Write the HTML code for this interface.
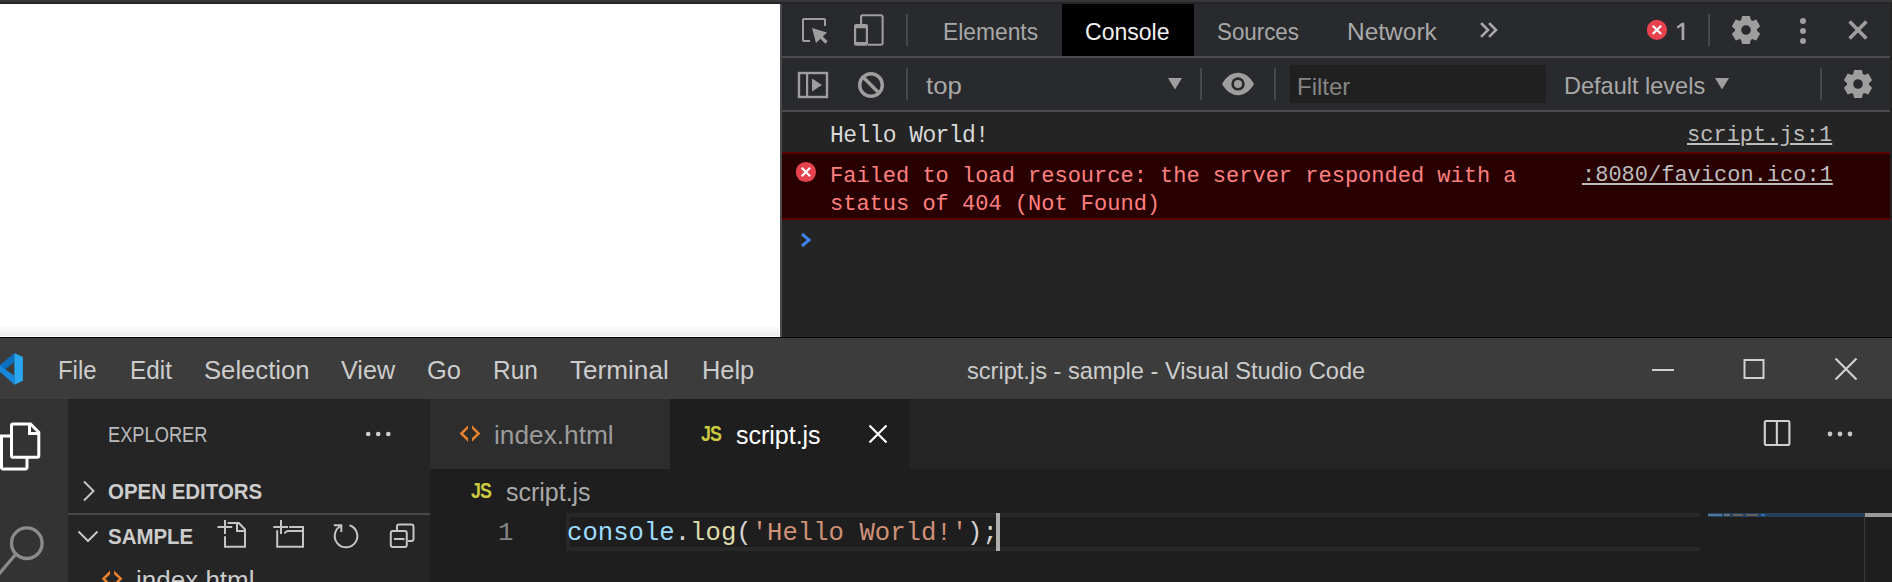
<!DOCTYPE html>
<html><head><meta charset="utf-8">
<style>
html,body{margin:0;padding:0;width:1892px;height:582px;overflow:hidden;background:#242424;}
*{box-sizing:border-box;}
.a{position:absolute;}
.s{font-family:"Liberation Sans",sans-serif;white-space:pre;line-height:1;}
.m{font-family:"Liberation Mono",monospace;white-space:pre;line-height:1;}
svg{position:absolute;overflow:visible;}
</style></head><body>
<!-- top strip -->
<div class="a" style="left:0;top:0;width:1892px;height:2px;background:#36373b"></div>
<div class="a" style="left:0;top:2px;width:1892px;height:2px;background:#252525"></div>
<!-- white page -->
<div class="a" style="left:0;top:4px;width:780px;height:333px;background:#ffffff"></div>
<div class="a" style="left:0;top:325px;width:779px;height:11px;background:linear-gradient(#ffffff,#ededed)"></div>
<!-- devtools -->
<div class="a" style="left:780px;top:4px;width:2px;height:333px;background:#4a4b4e"></div>
<div class="a" style="left:782px;top:4px;width:1110px;height:52px;background:#292a2d"></div>
<div class="a" style="left:782px;top:56px;width:1110px;height:2px;background:#4b4b4b"></div>
<div class="a" style="left:782px;top:58px;width:1110px;height:52px;background:#292a2d"></div>
<div class="a" style="left:782px;top:110px;width:1110px;height:2px;background:#4b4b4b"></div>
<div class="a" style="left:782px;top:112px;width:1110px;height:225px;background:#242424"></div>


<!-- toolbar1 icons -->
<svg style="left:0;top:0" width="1892" height="120" viewBox="0 0 1892 120">
 <g fill="none" stroke="#9e9e9e" stroke-width="2">
  <path d="M810 41H804a1 1 0 0 1-1-1V20a1 1 0 0 1 1-1H824a1 1 0 0 1 1 1V26"/>
 </g>
 <path d="M812 28L827 32.5L816 43Z" fill="#9e9e9e"/>
 <path d="M819 35L826.5 42.5" stroke="#9e9e9e" stroke-width="3.2"/>
 <path d="M861.1 24.2V16.7a1.5 1.5 0 0 1 1.5-1.5H881.1a1.5 1.5 0 0 1 1.5 1.5V43.2a1.5 1.5 0 0 1-1.5 1.5H868" fill="none" stroke="#9e9e9e" stroke-width="2.1"/>
 <path d="M856 24.1H866a2 2 0 0 1 2 2V43.8a2 2 0 0 1-2 2H856a2 2 0 0 1-2-2V26.1a2 2 0 0 1 2-2ZM856.2 28.2V42H865.8V28.2Z" fill="#9e9e9e" fill-rule="evenodd"/>
 <rect x="906" y="14" width="2" height="32" fill="#47484b"/>
 <!-- console tab bg drawn separately -->
</svg>
<div class="a" style="left:1062px;top:4px;width:132px;height:52px;background:#000"></div>
<div class="a s" style="left:943px;top:20px;font-size:24px;color:#a8a8a8;transform:scaleX(0.95);transform-origin:0 0">Elements</div>
<div class="a s" style="left:1085px;top:20px;font-size:24px;color:#f2f2f2;transform:scaleX(0.96);transform-origin:0 0">Console</div>
<div class="a s" style="left:1217px;top:20px;font-size:24px;color:#a8a8a8;transform:scaleX(0.93);transform-origin:0 0">Sources</div>
<div class="a s" style="left:1347px;top:20px;font-size:24px;color:#a8a8a8;transform:scaleX(1.02);transform-origin:0 0">Network</div>
<svg style="left:0;top:0" width="1892" height="120" viewBox="0 0 1892 120">
 <g fill="none" stroke="#a8a8a8" stroke-width="2.6" stroke-linecap="square">
  <path d="M1482 24L1488 30L1482 36"/>
  <path d="M1490 24L1496 30L1490 36"/>
 </g>
 <circle cx="1656.9" cy="29.9" r="10.1" fill="#e6434e"/>
 <path d="M1652.7 25.7L1661.1 34.1M1661.1 25.7L1652.7 34.1" stroke="#fff" stroke-width="2.1"/>
 <path d="M1684.3 22.7V40H1681.6V25.9L1677.6 28.8L1676.9 26.4L1681.9 22.7Z" fill="#a8a8a8"/>
 <rect x="1708" y="14" width="2" height="32" fill="#47484b"/>
 <!-- gear -->
 <g transform="translate(1746 30)" fill="#9e9e9e">
  <path d="M4.80 9.90L3.90 14.10L-3.90 14.10L-4.80 9.90A11.0 11.0 0 0 1 -6.17 9.11L-10.26 10.43L-14.16 3.67L-10.97 0.79A11.0 11.0 0 0 1 -10.97 -0.79L-14.16 -3.67L-10.26 -10.43L-6.17 -9.11A11.0 11.0 0 0 1 -4.80 -9.90L-3.90 -14.10L3.90 -14.10L4.80 -9.90A11.0 11.0 0 0 1 6.17 -9.11L10.26 -10.43L14.16 -3.67L10.97 -0.79A11.0 11.0 0 0 1 10.97 0.79L14.16 3.67L10.26 10.43L6.17 9.11A11.0 11.0 0 0 1 4.80 9.90ZM0 -4.8A4.8 4.8 0 1 0 0 4.8A4.8 4.8 0 1 0 0 -4.8Z" fill-rule="evenodd"/>
 </g>
 <circle cx="1803" cy="21" r="3" fill="#9e9e9e"/>
 <circle cx="1803" cy="31" r="3" fill="#9e9e9e"/>
 <circle cx="1803" cy="41" r="3" fill="#9e9e9e"/>
 <path d="M1849.6 21.6L1866.4 38.4M1866.4 21.6L1849.6 38.4" stroke="#9e9e9e" stroke-width="3.6"/>
</svg>


<!-- toolbar2 -->
<svg style="left:0;top:0" width="1892" height="120" viewBox="0 0 1892 120">
 <rect x="799" y="73" width="28" height="24" fill="none" stroke="#9e9e9e" stroke-width="2.4"/>
 <rect x="806" y="73" width="2.2" height="24" fill="#9e9e9e"/>
 <path d="M812 78.5L822 85L812 91.5Z" fill="#9e9e9e"/>
 <circle cx="871" cy="85" r="11.3" fill="none" stroke="#9e9e9e" stroke-width="3.4"/>
 <path d="M863 77L879 93" stroke="#9e9e9e" stroke-width="3.4"/>
 <rect x="906" y="68" width="2" height="32" fill="#47484b"/>
 <path d="M1168 78L1182 78L1175 89.5Z" fill="#9e9e9e"/>
 <rect x="1200" y="68" width="2" height="32" fill="#47484b"/>
 <path d="M1222 84C1226 76.7 1232 72.8 1238 72.8C1244 72.8 1250 76.7 1254 84C1250 91.3 1244 95.2 1238 95.2C1232 95.2 1226 91.3 1222 84Z" fill="#9e9e9e"/>
 <circle cx="1238" cy="83.9" r="6.7" fill="#292a2d"/>
 <circle cx="1238" cy="83.9" r="4.0" fill="#9e9e9e"/>
 <rect x="1274" y="68" width="2" height="32" fill="#47484b"/>
 <rect x="1290" y="65" width="256" height="38" fill="#202020"/>
 <path d="M1715 78L1729 78L1722 89.5Z" fill="#9e9e9e"/>
 <rect x="1820" y="68" width="2" height="32" fill="#47484b"/>
 <path transform="translate(1858 84)" fill="#9e9e9e" fill-rule="evenodd" d="M4.80 9.90L3.90 14.10L-3.90 14.10L-4.80 9.90A11.0 11.0 0 0 1 -6.17 9.11L-10.26 10.43L-14.16 3.67L-10.97 0.79A11.0 11.0 0 0 1 -10.97 -0.79L-14.16 -3.67L-10.26 -10.43L-6.17 -9.11A11.0 11.0 0 0 1 -4.80 -9.90L-3.90 -14.10L3.90 -14.10L4.80 -9.90A11.0 11.0 0 0 1 6.17 -9.11L10.26 -10.43L14.16 -3.67L10.97 -0.79A11.0 11.0 0 0 1 10.97 0.79L14.16 3.67L10.26 10.43L6.17 9.11A11.0 11.0 0 0 1 4.80 9.90ZM0 -4.8A4.8 4.8 0 1 0 0 4.8A4.8 4.8 0 1 0 0 -4.8Z"/>
</svg>
<div class="a s" style="left:926px;top:74px;font-size:24px;color:#a8a8a8;transform:scaleX(1.07);transform-origin:0 0">top</div>
<div class="a s" style="left:1297px;top:75px;font-size:24px;color:#858585">Filter</div>
<div class="a s" style="left:1564px;top:74px;font-size:24px;color:#a8a8a8;transform:scaleX(0.98);transform-origin:0 0">Default levels</div>

<!-- console -->
<div class="a m" style="left:830px;top:125px;font-size:23px;letter-spacing:-0.6px;color:#d9d9d9">Hello World!</div>
<div class="a m" style="left:1687px;top:125px;font-size:22px;color:#bdbdbd;text-decoration:underline">script.js:1</div>
<div class="a" style="left:782px;top:152px;width:1110px;height:68px;background:#5c0000"></div>
<div class="a" style="left:782px;top:154px;width:1110px;height:64px;background:#290000"></div>
<svg style="left:0;top:0" width="1892" height="260" viewBox="0 0 1892 260">
 <circle cx="805.9" cy="172" r="10.1" fill="#e6434e"/>
 <path d="M801.7 167.8L810.1 176.2M810.1 167.8L801.7 176.2" stroke="#fff" stroke-width="2.1"/>
 <path d="M802 234L809 240L802 246" fill="none" stroke="#3f82ef" stroke-width="3"/>
</svg>
<div class="a m" style="left:830px;top:163px;font-size:22px;color:#ff8080;line-height:27.5px">Failed to load resource: the server responded with a
status of 404 (Not Found)</div>
<div class="a m" style="left:1582px;top:165px;font-size:22px;color:#bdbdbd;text-decoration:underline">:8080/favicon.ico:1</div>

<div class="a" style="left:1890px;top:4px;width:2px;height:333px;background:#242424"></div>
<!-- bottom black line -->
<div class="a" style="left:0;top:337px;width:1892px;height:1px;background:#000000"></div>
<!-- VS Code -->
<div class="a" style="left:0;top:338px;width:1892px;height:61px;background:#3c3c3c"></div>
<div class="a" style="left:0;top:399px;width:68px;height:183px;background:#333333"></div>
<div class="a" style="left:68px;top:399px;width:362px;height:183px;background:#252526"></div>
<div class="a" style="left:430px;top:399px;width:1462px;height:70px;background:#252526"></div>
<div class="a" style="left:430px;top:399px;width:240px;height:70px;background:#2d2d2d"></div>
<div class="a" style="left:670px;top:399px;width:240px;height:70px;background:#1e1e1e"></div>
<div class="a" style="left:430px;top:469px;width:1462px;height:113px;background:#1e1e1e"></div>


<!-- VS title bar -->
<svg style="left:0;top:0" width="1892" height="582" viewBox="0 0 1892 582">
 <path d="M14.4 353.1V362.1L0 373.5V365Z" fill="#0b6fbd"/>
 <path d="M0 365.7L14.4 375.8V384.8L0 371.8Z" fill="#1689dc"/>
 <path d="M14.4 353.1L22.9 357V380.8L14.4 384.8Z" fill="#29a8f1"/>
 <path d="M1652 370H1674" stroke="#d0d0d0" stroke-width="2"/>
 <rect x="1744.5" y="360" width="19" height="18" fill="none" stroke="#d0d0d0" stroke-width="2"/>
 <path d="M1835.5 358.5L1856.5 379.5M1856.5 358.5L1835.5 379.5" stroke="#d0d0d0" stroke-width="2.2"/>
</svg>
<div class="a s" style="left:58px;top:357px;font-size:26px;color:#cccccc;transform:scaleX(0.92);transform-origin:0 0">File</div>
<div class="a s" style="left:130px;top:357px;font-size:26px;color:#cccccc;transform:scaleX(0.935);transform-origin:0 0">Edit</div>
<div class="a s" style="left:204px;top:357px;font-size:26px;color:#cccccc;transform:scaleX(0.987);transform-origin:0 0">Selection</div>
<div class="a s" style="left:341px;top:357px;font-size:26px;color:#cccccc;transform:scaleX(0.968);transform-origin:0 0">View</div>
<div class="a s" style="left:427px;top:357px;font-size:26px;color:#cccccc;transform:scaleX(0.98);transform-origin:0 0">Go</div>
<div class="a s" style="left:493px;top:357px;font-size:26px;color:#cccccc;transform:scaleX(0.94);transform-origin:0 0">Run</div>
<div class="a s" style="left:570px;top:357px;font-size:26px;color:#cccccc;transform:scaleX(1.005);transform-origin:0 0">Terminal</div>
<div class="a s" style="left:702px;top:357px;font-size:26px;color:#cccccc;transform:scaleX(0.977);transform-origin:0 0">Help</div>
<div class="a s" style="left:967px;top:359px;font-size:24px;color:#cccccc;transform:scaleX(0.983);transform-origin:0 0">script.js - sample - Visual Studio Code</div>

<!-- activity bar icons -->
<svg style="left:0;top:0" width="1892" height="582" viewBox="0 0 1892 582">
 <g fill="none" stroke="#ffffff" stroke-width="3">
  <path d="M11.5 436H1.5V467.5a1.5 1.5 0 0 0 1.5 1.5H25.5a1.5 1.5 0 0 0 1.5-1.5V457.5"/>
  <path d="M13 424H30.5L38.8 432.3V455.7a1.5 1.5 0 0 1-1.5 1.5H13a1.5 1.5 0 0 1-1.5-1.5V425.5a1.5 1.5 0 0 1 1.5-1.5Z"/>
  <path d="M29.5 424V433.5H38.8"/>
 </g>
 <g fill="none" stroke="#8b8b8b" stroke-width="3.3">
  <circle cx="26.8" cy="543.2" r="15.3"/>
  <path d="M16 554L-2 575"/>
 </g>
</svg>

<!-- sidebar -->
<div class="a s" style="left:108px;top:424px;font-size:22px;color:#bbbbbb;transform:scaleX(0.83);transform-origin:0 0">EXPLORER</div>
<svg style="left:0;top:0" width="1892" height="582" viewBox="0 0 1892 582">
 <circle cx="368.2" cy="434" r="2.3" fill="#d0d0d0"/>
 <circle cx="378.2" cy="434" r="2.3" fill="#d0d0d0"/>
 <circle cx="388.3" cy="434" r="2.3" fill="#d0d0d0"/>
 <path d="M84 481.5L93.5 491L84 500.5" fill="none" stroke="#c5c5c5" stroke-width="2"/>
 <rect x="68" y="513" width="362" height="2" fill="#474747"/>
 <path d="M78.5 531.5L88 541L97.5 531.5" fill="none" stroke="#c5c5c5" stroke-width="2"/>
 <g fill="none" stroke="#c5c5c5" stroke-width="2">
  <path d="M225 520V534M217.5 527H232.2"/>
  <path d="M227.6 523H238.8L245 529.5V546.8H225V536.3"/>
  <path d="M237 523V531H245"/>
  <path d="M281 520V534M273.3 527H288"/>
  <path d="M277.2 530.2V546.8H303V527H289.2"/>
  <path d="M284.3 533.2L287.4 530.9H302.5"/>
  <path d="M333.8 525.3H341.3V532"/>
  <path d="M341.4 525.7A11.3 11.3 0 1 0 349.5 525.25"/>
  <rect x="390.8" y="531" width="16" height="16" rx="2"/>
  <path d="M397 530V526.5a2 2 0 0 1 2-2H411.5a2 2 0 0 1 2 2V539a2 2 0 0 1-2 2H408"/>
  <path d="M394 539H404.5"/>
 </g>
 <path transform="translate(-357.9 145.4)" d="M468 425.2L459.6 433.4L468 441.7V438.1L463.2 433.4L468 428.8ZM472 425.2L480.4 433.4L472 441.7V438.1L476.8 433.4L472 428.8Z" fill="#e8822e"/>
</svg>
<div class="a s" style="left:108px;top:481px;font-size:22px;font-weight:bold;color:#cccccc;transform:scaleX(0.93);transform-origin:0 0">OPEN EDITORS</div>
<div class="a s" style="left:108px;top:526px;font-size:22px;font-weight:bold;color:#cccccc;transform:scaleX(0.93);transform-origin:0 0">SAMPLE</div>
<div class="a s" style="left:136px;top:567px;font-size:26px;color:#cccccc;transform:scaleX(1.0);transform-origin:0 0">index.html</div>

<!-- tabs -->
<svg style="left:0;top:0" width="1892" height="582" viewBox="0 0 1892 582">
 <path d="M468 425.2L459.6 433.4L468 441.7V438.1L463.2 433.4L468 428.8ZM472 425.2L480.4 433.4L472 441.7V438.1L476.8 433.4L472 428.8Z" fill="#e8822e"/>
 <path d="M869.5 425.5L886.5 442.5M886.5 425.5L869.5 442.5" stroke="#ffffff" stroke-width="2.2"/>
 <rect x="1764.8" y="421" width="24.6" height="24" rx="1.3" fill="none" stroke="#d0d0d0" stroke-width="2.1"/>
 <rect x="1775.8" y="421" width="2.1" height="24" fill="#d0d0d0"/>
 <circle cx="1830" cy="434" r="2.4" fill="#c5c5c5"/>
 <circle cx="1840" cy="434" r="2.4" fill="#c5c5c5"/>
 <circle cx="1850" cy="434" r="2.4" fill="#c5c5c5"/>
</svg>
<div class="a s" style="left:701px;top:424px;font-size:21.5px;font-weight:bold;letter-spacing:-1.2px;transform:scaleX(0.83);transform-origin:0 0;color:#cbcb41">JS</div>
<div class="a s" style="left:494px;top:422px;font-size:26px;color:#9b9b9b;transform:scaleX(1.01);transform-origin:0 0">index.html</div>
<div class="a s" style="left:736px;top:422px;font-size:26px;color:#ffffff;transform:scaleX(0.96);transform-origin:0 0">script.js</div>

<!-- breadcrumb -->
<div class="a s" style="left:471px;top:481px;font-size:21.5px;font-weight:bold;letter-spacing:-1.2px;transform:scaleX(0.83);transform-origin:0 0;color:#cbcb41">JS</div>
<div class="a s" style="left:506px;top:479px;font-size:26px;color:#a9a9a9;transform:scaleX(0.96);transform-origin:0 0">script.js</div>

<!-- editor line -->
<div class="a" style="left:566px;top:513px;width:1134px;height:38px;border:4px solid #282828;border-right:none"></div>
<div class="a m" style="left:498px;top:521px;font-size:25.8px;color:#858585">1</div>
<div class="a m" style="left:567px;top:521px;font-size:25.65px;color:#d4d4d4"><span style="color:#9cdcfe">console</span>.<span style="color:#dcdcaa">log</span>(<span style="color:#ce9178">'Hello World!'</span>);</div>
<div class="a" style="left:996px;top:513px;width:4px;height:38px;background:#aeafad"></div>

<!-- minimap -->
<div class="a" style="left:1708px;top:513px;width:156px;height:4px;background:#25405c"></div>
<div class="a" style="left:1708px;top:514px;width:14px;height:2px;background:#4d7699"></div>
<div class="a" style="left:1724px;top:514px;width:6px;height:2px;background:#66707a"></div>
<div class="a" style="left:1733px;top:514px;width:10px;height:2px;background:#6a5f58"></div>
<div class="a" style="left:1746px;top:514px;width:12px;height:2px;background:#6a5f58"></div>
<div class="a" style="left:1761px;top:514px;width:4px;height:2px;background:#2f6cb8"></div>
<div class="a" style="left:1864px;top:513px;width:1px;height:69px;background:#3b3b3b"></div>
<div class="a" style="left:1865px;top:513px;width:27px;height:4px;background:#9a9a9a"></div>

</body></html>
